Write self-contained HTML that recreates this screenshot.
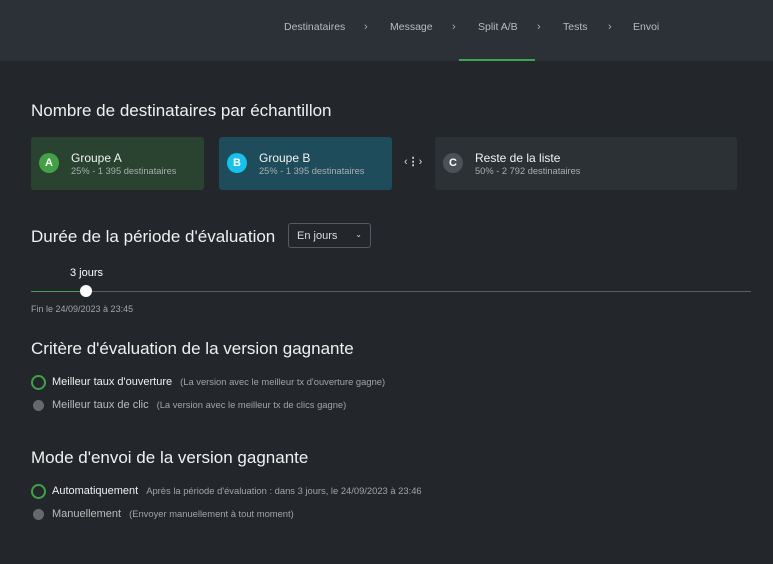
<!DOCTYPE html>
<html><head><meta charset="utf-8"><style>
*{margin:0;padding:0;box-sizing:border-box}
body{width:773px;height:564px;background:#23272b;font-family:"Liberation Sans",sans-serif;color:#e8e8e8;position:relative;overflow:hidden}
.hdr{position:absolute;left:0;top:0;width:773px;height:61px;background:#2c3138}
.nav{position:absolute;top:21px;font-size:10.5px;color:#b8bcc0}
.chev{position:absolute;top:21px;font-size:11px;color:#aaa}
.ul{position:absolute;left:459px;top:59px;width:76px;height:2px;background:#3fa34d}
h2{position:absolute;font-weight:normal;font-size:17px;color:#f0f0f0;left:31px}
.card{position:absolute;top:137px;height:53px;border-radius:3px}
.circ{position:absolute;left:8px;top:16px;width:20px;height:20px;border-radius:50%;font-size:11px;font-weight:bold;color:#fff;text-align:center;line-height:20px}
.t{position:absolute;left:40px;top:14px;font-size:12px;color:#f2f2f2}
.s{position:absolute;left:40px;top:29px;font-size:9.3px;color:#a8adb0}
.r{position:absolute;left:31px;font-size:11px}
.r .o{position:absolute;left:0;top:0;width:15px;height:15px;border-radius:50%}
.r .l{position:absolute;left:21px;top:1px;white-space:nowrap;color:#f0f0f0}
.r .d{font-size:9.4px;color:#a0a4a8;margin-left:8px}
</style></head><body>
<div class="hdr"></div>
<span class="nav" style="left:284px">Destinataires</span><span class="chev" style="left:364px">›</span>
<span class="nav" style="left:390px">Message</span><span class="chev" style="left:452px">›</span>
<span class="nav" style="left:478px">Split A/B</span><span class="chev" style="left:537px">›</span>
<span class="nav" style="left:563px">Tests</span><span class="chev" style="left:608px">›</span>
<span class="nav" style="left:633px">Envoi</span>
<div class="ul"></div>
<h2 style="top:101px">Nombre de destinataires par échantillon</h2>
<div class="card" style="left:31px;width:173px;background:#2a4330"><div class="circ" style="background:#43a047">A</div><div class="t">Groupe A</div><div class="s">25% - 1 395 destinataires</div></div>
<div class="card" style="left:219px;width:173px;background:#1f4c5b"><div class="circ" style="background:#19c0ea">B</div><div class="t">Groupe B</div><div class="s">25% - 1 395 destinataires</div></div>
<div style="position:absolute;left:404px;top:155px;font-size:11px;color:#ddd">‹<b>⋮</b>›</div>
<div class="card" style="left:435px;width:302px;background:#2c3136"><div class="circ" style="background:#4c5157">C</div><div class="t">Reste de la liste</div><div class="s">50% - 2 792 destinataires</div></div>
<h2 style="top:227px">Durée de la période d'évaluation</h2>
<div style="position:absolute;left:288px;top:223px;width:83px;height:25px;border:1px solid #555b60;border-radius:3px;font-size:11px;color:#ddd;padding:6px 0 0 8px">En jours<span style="position:absolute;right:8px;top:6px;font-size:8px">⌄</span></div>
<div style="position:absolute;left:70px;top:267px;font-size:11px;color:#fff">3 jours</div>
<div style="position:absolute;left:31px;top:291px;width:720px;height:1px;background:#5c6064"></div>
<div style="position:absolute;left:31px;top:291px;width:55px;height:1px;background:#3fa34d"></div>
<div style="position:absolute;left:80px;top:285px;width:12px;height:12px;border-radius:50%;background:#fff"></div>
<div style="position:absolute;left:31px;top:304px;font-size:9px;color:#a0a4a8">Fin le 24/09/2023 à 23:45</div>
<h2 style="top:339px">Critère d'évaluation de la version gagnante</h2>
<div class="r" style="top:375px"><div class="o" style="border:2px solid #43a047"></div><div class="l">Meilleur taux d'ouverture<span class="d">(La version avec le meilleur tx d'ouverture gagne)</span></div></div>
<div class="r" style="top:398px"><div class="o" style="background:#666a6e;width:11px;height:11px;left:2px;top:2px"></div><div class="l" style="color:#bbb">Meilleur taux de clic<span class="d">(La version avec le meilleur tx de clics gagne)</span></div></div>
<h2 style="top:448px">Mode d'envoi de la version gagnante</h2>
<div class="r" style="top:484px"><div class="o" style="border:2px solid #43a047"></div><div class="l">Automatiquement<span class="d">Après la période d'évaluation : dans 3 jours, le 24/09/2023 à 23:46</span></div></div>
<div class="r" style="top:507px"><div class="o" style="background:#666a6e;width:11px;height:11px;left:2px;top:2px"></div><div class="l" style="color:#bbb">Manuellement<span class="d">(Envoyer manuellement à tout moment)</span></div></div>
</body></html>
